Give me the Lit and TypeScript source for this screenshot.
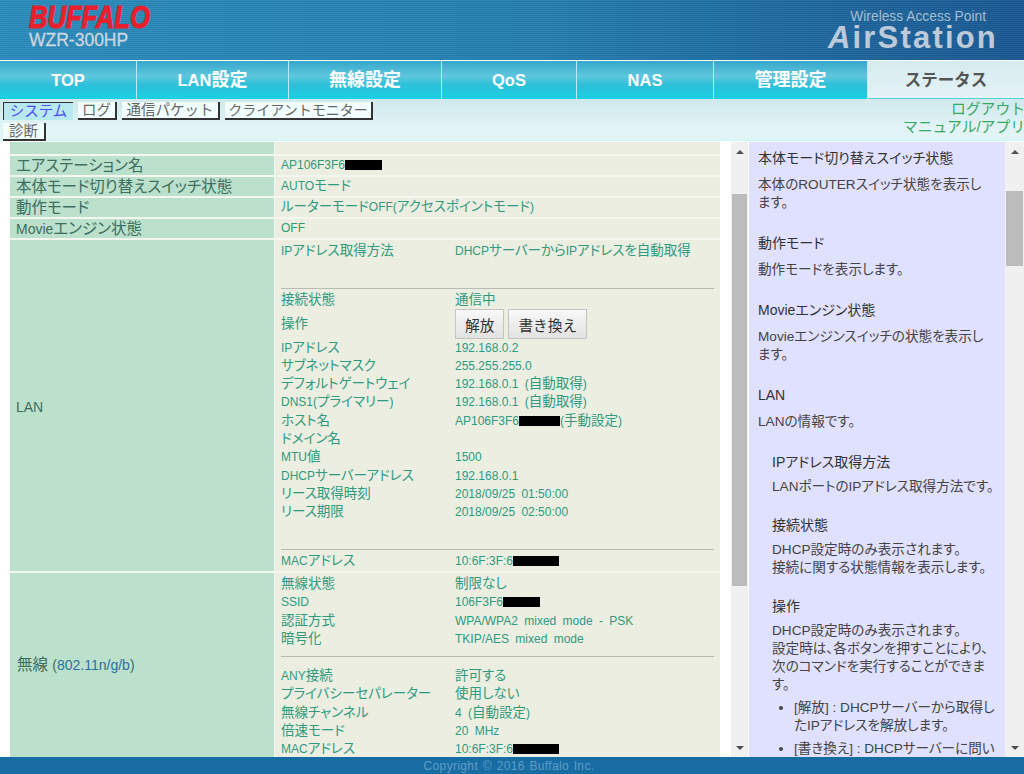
import { LitElement, html, css } from 'lit'
import { customElement } from 'lit/decorators.js'

const tabs = [
  ['TOP', '', 137],
  ['LAN', '設定', 152],
  ['', '無線設定', 153],
  ['QoS', '', 135],
  ['NAS', '', 137],
  ['', '管理設定', 154],
]

const buttons = [
  ['通信パケット', 98],
  ['クライアントモニター', 148],
]

// [label, value, redaction width, text after redaction]
type Row = [string, string, number?, string?]

// latin runs are set smaller than the kanji around them
const mix = (text: string) => text.split(/([\x00-\x7f]+)/).map((part, i) =>
  i % 2 ? html`<span class="la">${part}</span>` : part)

const block = (w: number) => html`<span class="mask" style="width:${w}px"></span>`

const detail = (rows: Row[]) => rows.map(([k, v, w, after]) => html`
  <div class="drow">
    <span class="dk">${mix(k)}</span>
    <span class="dv">${mix(v)}${w ? block(w) : ''}${mix(after ?? '')}</span>
  </div>`)

@customElement('app-root')
export class AppRoot extends LitElement {
  static styles = css`
  :host {
    display: flex;
    flex-direction: column;
    height: 774px;
    overflow: hidden;
    background: #fff;
    font-family: "Liberation Sans", "Noto Sans CJK JP", sans-serif;
  }

  /* header */
  .head {
    height: 60px;
    flex: none;
    display: flex;
    justify-content: space-between;
    background:
      repeating-linear-gradient(180deg, rgba(255,255,255,.035) 0 1px, rgba(0,0,0,.035) 1px 2px),
      linear-gradient(90deg, #2b8cbc 0%, #2580b0 50%, #1a5893 100%);
  }
  .brand { padding: 1px 0 0 29px; }
  .logo {
    font-size: 32px;
    line-height: 32px;
    font-weight: 700;
    font-style: italic;
    color: #e8202e;
    -webkit-text-stroke: 1.2px #e8202e;
    transform: scaleX(.8);
    transform-origin: left;
  }
  .model { font-size: 17.5px; line-height: 14px; color: #ccd6de; -webkit-text-stroke: .3px #ccd6de; }
  .air { padding: 9px 28px 0 0; text-align: right; }
  .wap { font-size: 13.8px; line-height: 15px; color: #a3bdd1; padding-right: 10px; }
  .station { font-size: 31px; line-height: 28px; font-weight: 700; letter-spacing: 2.2px; color: #bccada; margin-right: -2px; }
  .station i { letter-spacing: 0; margin-right: 2px; }

  /* tabs */
  .tabs { display: flex; flex: none; height: 38px; margin-top: 1px; }
  .tab {
    box-sizing: border-box;
    display: flex;
    align-items: baseline;
    justify-content: center;
    line-height: 39px;
    color: #fff;
    font-size: 16.5px;
    font-weight: 700;
    border-right: 1px solid #bfe9f0;
    background: linear-gradient(180deg, #36a6cb 0%, #5fc7de 40%, #2dc0d8 62%, #1ad0e4 100%);
  }
  .tab .jp { font-size: 18px; }
  .tab.on {
    flex: 1;
    color: #555;
    border-right: 0;
    border-bottom: 1px solid #55d0d8;
    background: linear-gradient(180deg, #d6ebef 0%, #e4f3f5 100%);
  }

  /* sub navigation */
  .sub {
    flex: none;
    height: 41px;
    display: flex;
    justify-content: space-between;
    border-bottom: 1px solid #c8f8f8;
    background: linear-gradient(180deg, #d0e8ec 0%, #e2f4f6 70%, #e0f4f6 100%);
    margin-bottom: 1px;
  }
  .btns { width: 380px; padding: 3px 0 0 3px; display: flex; flex-wrap: wrap; column-gap: 5px; row-gap: 3px; align-content: flex-start; }
  .btn {
    box-sizing: border-box;
    height: 18px;
    line-height: 16px;
    font-size: 14.5px;
    text-align: center;
    white-space: nowrap;
    color: #666;
    background: #f2fefe;
    border-right: 2px solid #333;
    border-bottom: 2px solid #333;
  }
  .btn.tight { font-size: 14px; }
  .btn.on {
    color: #4a4af0;
    background: #b8e8f0;
    border: 0;
    border-top: 1px solid #333;
    border-left: 1px solid #333;
  }
  .links { text-align: right; font-size: 14.8px; line-height: 18px; color: #37a862; padding-top: 1px; white-space: nowrap; margin-right: -1px; }

  /* body */
  .body { flex: 1; min-height: 0; display: flex; }
  .main { width: 710px; margin-left: 10px; overflow: hidden; display: flex; flex-direction: column; gap: 2px; background: #f3f7ef; flex: none; font-feature-settings: "palt"; }
  .row { display: flex; flex: none; height: 19px; }
  .k {
    box-sizing: border-box;
    width: 264px;
    flex: none;
    margin-right: 1px;
    background: #bbe0cc;
    color: #3d6d60;
    font-size: 15.5px;
    line-height: 19px;
    padding-left: 6px;
    display: flex;
    align-items: center;
    white-space: pre;
  }
  .k .la { font-size: 14px; }
  .v { flex: 1; background: #ebeee0; color: #2f9a80; font-size: 13.5px; line-height: 18px; padding-left: 6px; overflow: hidden; white-space: nowrap; }
  .la { font-size: 12px; word-spacing: 3px; }
  .top { height: 12px; }
  .lan { height: 331px; }
  .lan .k { padding-top: 2px; }
  .wl { height: 184px; }
  .wl .k { padding-left: 7px; }
  .k .blue { color: #2f6fa0; }
  .group { width: 433px; padding-top: 2px; }
  .drow { display: flex; height: 18.3px; line-height: 18.3px; }
  .dk { width: 174px; flex: none; }
  .mask { display: inline-block; height: 10px; background: #000; vertical-align: -1px; }
  hr { border: 0; height: 1px; background: #b9bab6; margin: 0; }
  .gap1 { height: 28px; }
  .gap2 { height: 27px; }
  .hr-lan { margin-bottom: 2px; }
  .hr-wl { margin: 8px 0 10px; }
  .ops { height: 29px; display: flex; align-items: center; }
  .push {
    box-sizing: border-box;
    flex: none;
    height: 30px;
    padding: 0 9px;
    margin-right: 4px;
    font: 14.7px "Liberation Sans", "Noto Sans CJK JP", sans-serif;
    color: #333;
    border: 1px solid #c4c4c4;
    background: linear-gradient(180deg, #f8f8f8, #e2e2e2);
  }

  /* fake scrollbars */
  .bar { flex: none; width: 17px; display: flex; flex-direction: column; align-items: center; background: #f0f0f0; padding: 8px 0 7px; box-sizing: border-box; }
  .bar.wide { width: 19px; }
  .up, .dn { width: 0; height: 0; border-left: 4px solid transparent; border-right: 4px solid transparent; flex: none; }
  .up { border-bottom: 4px solid #505050; }
  .dn { border-top: 4px solid #505050; margin-top: auto; }
  .thumb { background: #bcbcbc; width: 15px; flex: none; height: 392px; margin-top: 40px; }
  .wide .thumb { width: 17px; height: 75px; margin-top: 37px; }
  .gapw { width: 11px; flex: none; }

  /* help pane */
  .help {
    box-sizing: border-box;
    width: 256px;
    margin-left: 1px;
    flex: none;
    overflow: hidden;
    background: #e0e0ff;
    color: #444;
    font-size: 13.6px;
    font-feature-settings: "palt";
    line-height: 18px;
    padding: 7px 0 0 9px;
  }
  .help h4 { margin: 0; font-size: 14px; font-weight: 400; color: #333; line-height: 18px; }
  .help p { margin: 9px 0 22px; white-space: nowrap; }
  .ind { padding-left: 14px; }
  .ind p { margin: 7px 0 20px; }
  .ind ul { margin: 0; padding: 0 0 0 22px; }
  .ind li { margin: 5px 0; white-space: nowrap; }
  .ind .lead { margin-bottom: 1px; }

  .foot { flex: none; height: 17px; background: #176ca4; color: #5f9cc4; font-size: 12px; line-height: 18px; text-align: center; letter-spacing: .35px; word-spacing: 1px; padding-right: 6px; z-index: 1; }
  `

  render () {
    return html`
      <div class="head">
        <div class="brand">
          <div class="logo">BUFFALO</div>
          <div class="model">WZR-300HP</div>
        </div>
        <div class="air">
          <div class="wap">Wireless Access Point</div>
          <div class="station"><i>A</i>irStation</div>
        </div>
      </div>
      <div class="tabs">
        ${tabs.map(([la, jp, w]) => html`<div class="tab" style="width:${w}px">${la}<span class="jp">${jp}</span></div>`)}
        <div class="tab on">ステータス</div>
      </div>
      <div class="sub">
        <div class="btns">
          <span class="btn on" style="width:70px">システム</span>
          <span class="btn" style="width:39px">ログ</span>
          ${buttons.map(([t, w]) => html`<span class="btn ${Number(w) > 100 ? 'tight' : ''}" style="width:${w}px">${t}</span>`)}
          <span class="btn" style="width:43px">診断</span>
        </div>
        <div class="links">ログアウト<br>マニュアル/アプリ</div>
      </div>
      <div class="body">
        <div class="main">
          <div class="row top"><div class="k"></div><div class="v"></div></div>
          <div class="row"><div class="k">エアステーション名</div><div class="v">${mix('AP106F3F6')}${block(37)}</div></div>
          <div class="row"><div class="k">本体モード切り替えスイッチ状態</div><div class="v">${mix('AUTOモード')}</div></div>
          <div class="row"><div class="k">動作モード</div><div class="v">${mix('ルーターモードOFF(アクセスポイントモード)')}</div></div>
          <div class="row"><div class="k"><span>${mix('Movie')}エンジン状態</span></div><div class="v">${mix('OFF')}</div></div>
          <div class="row lan">
            <div class="k"><span>${mix('LAN')}</span></div>
            <div class="v"><div class="group">
              ${detail([['IPアドレス取得方法', 'DHCPサーバーからIPアドレスを自動取得']])}
              <div class="gap1"></div>
              <hr class="hr-lan">
              ${detail([['接続状態', '通信中']])}
              <div class="ops"><span class="dk">操作</span><button class="push">解放</button><button class="push">書き換え</button></div>
              ${detail([
                ['IPアドレス', '192.168.0.2'],
                ['サブネットマスク', '255.255.255.0'],
                ['デフォルトゲートウェイ', '192.168.0.1 (自動取得)'],
                ['DNS1(プライマリー)', '192.168.0.1 (自動取得)'],
                ['ホスト名', 'AP106F3F6', 41, '(手動設定)'],
                ['ドメイン名', ''],
                ['MTU値', '1500'],
                ['DHCPサーバーアドレス', '192.168.0.1'],
                ['リース取得時刻', '2018/09/25 01:50:00'],
                ['リース期限', '2018/09/25 02:50:00'],
              ])}
              <div class="gap2"></div>
              <hr class="hr-lan">
              ${detail([['MACアドレス', '10:6F:3F:6', 46]])}
            </div></div>
          </div>
          <div class="row wl">
            <div class="k"><span>無線 <span class="la">(<span class="blue">802.11n/g/b</span>)</span></span></div>
            <div class="v"><div class="group">
              ${detail([
                ['無線状態', '制限なし'],
                ['SSID', '106F3F6', 37],
                ['認証方式', 'WPA/WPA2 mixed mode - PSK'],
                ['暗号化', 'TKIP/AES mixed mode'],
              ])}
              <hr class="hr-wl">
              ${detail([
                ['ANY接続', '許可する'],
                ['プライバシーセパレーター', '使用しない'],
                ['無線チャンネル', '4 (自動設定)'],
                ['倍速モード', '20 MHz'],
                ['MACアドレス', '10:6F:3F:6', 46],
              ])}
            </div></div>
          </div>
        </div>
        <div class="gapw"></div>
        <div class="bar">
          <div class="up"></div>
          <div class="thumb"></div>
          <div class="dn"></div>
        </div>
        <div class="help">
          <h4>本体モード切り替えスイッチ状態</h4>
          <p>本体のROUTERスイッチ状態を表示し<br>ます。</p>
          <h4>動作モード</h4>
          <p>動作モードを表示します。</p>
          <h4>Movieエンジン状態</h4>
          <p>Movieエンジンスイッチの状態を表示し<br>ます。</p>
          <h4>LAN</h4>
          <p>LANの情報です。</p>
          <div class="ind">
            <h4>IPアドレス取得方法</h4>
            <p>LANポートのIPアドレス取得方法です。</p>
            <h4>接続状態</h4>
            <p>DHCP設定時のみ表示されます。<br>接続に関する状態情報を表示します。</p>
            <h4>操作</h4>
            <p class="lead">DHCP設定時のみ表示されます。<br>設定時は、各ボタンを押すことにより、<br>次のコマンドを実行することができま<br>す。</p>
            <ul>
              <li>[解放] : DHCPサーバーから取得し<br>たIPアドレスを解放します。</li>
              <li>[書き換え] : DHCPサーバーに問い<br>合わせ、IPアドレスを再取得します。</li>
            </ul>
          </div>
        </div>
        <div class="bar wide">
          <div class="up"></div>
          <div class="thumb"></div>
          <div class="dn"></div>
        </div>
      </div>
      <div class="foot">Copyright © 2016 Buffalo Inc.</div>
    `
  }
}
